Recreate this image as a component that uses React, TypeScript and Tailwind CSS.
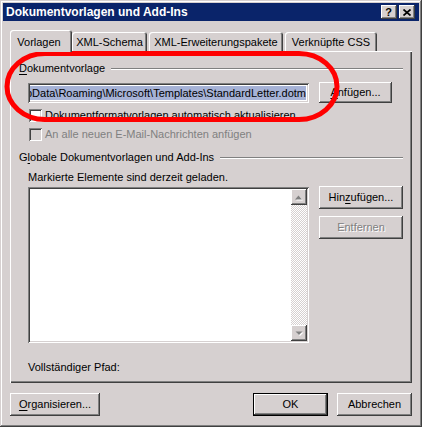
import React from 'react';

// classic 3d bevels
const raised = 'shadow-[inset_-1px_-1px_#404040,inset_1px_1px_#ffffff,inset_-2px_-2px_#808080,inset_2px_2px_#d6d0d0]';
const sunken = 'shadow-[inset_1px_1px_#808080,inset_-1px_-1px_#ffffff,inset_2px_2px_#404040,inset_-2px_-2px_#d6d0d0]';

const Key: React.FC<{ children: React.ReactNode }> = ({ children }) => (
    <span className="underline underline-offset-[2px]">{children}</span>
);

const Button: React.FC<{ children: React.ReactNode; className?: string; disabled?: boolean }> = ({ children, className = '', disabled = false }) => (
    <div
        className={`flex items-center justify-center bg-[#d6d0d0] ${raised} ${className} ${
            disabled ? 'text-[#808080] [text-shadow:1px_1px_0_#ffffff]' : 'text-black'
        }`}
    >
        {children}
    </div>
);

const Checkbox: React.FC<{ disabled?: boolean }> = ({ disabled = false }) => (
    <div className={`w-[13px] h-[13px] shrink-0 ${sunken} ${disabled ? 'bg-[#d6d0d0]' : 'bg-white'}`} />
);

const GroupHeader: React.FC<{ children: React.ReactNode; className?: string }> = ({ children, className = '' }) => (
    <div className={`flex items-center h-[13px] ${className}`}>
        <span className="leading-[13px] whitespace-nowrap">{children}</span>
        <div className="flex-1 ml-[6px] h-[2px] border-t border-t-[#808080] border-b border-b-white" />
    </div>
);

const Tab: React.FC<{ label: string; width: string; selected?: boolean }> = ({ label, width, selected = false }) =>
    selected ? (
        <div className={`relative z-10 ${width} h-[22px] -mb-[1px] pt-[6px] pr-[4px] text-center leading-[13px] bg-[#d6d0d0] rounded-t-[3px] shadow-[inset_1px_1px_#ffffff,inset_-1px_0_#404040,inset_-2px_0_#808080]`}>
            {label}
        </div>
    ) : (
        <div className={`${width} h-[19px] pt-[4px] text-center leading-[13px] bg-[#d6d0d0] rounded-t-[3px] shadow-[inset_1px_1px_#ffffff,inset_-1px_0_#404040,inset_-2px_0_#808080]`}>
            {label}
        </div>
    );

const ArrowButton: React.FC<{ down?: boolean }> = ({ down = false }) => (
    <div className={`h-[16px] flex items-center justify-center bg-[#d6d0d0] ${raised}`}>
        <svg width="8" height="5" viewBox="0 0 8 5" className="overflow-visible">
            {down ? (
                <>
                    <path d="M1.5 1.5 H8.5 L5 5 Z" fill="#ffffff" />
                    <path d="M0.5 0.5 H7.5 L4 4 Z" fill="#808080" />
                </>
            ) : (
                <>
                    <path d="M1 5.5 H8 L4.5 1.5 Z" fill="#ffffff" />
                    <path d="M0 4.5 H7 L3.5 0.5 Z" fill="#808080" />
                </>
            )}
        </svg>
    </div>
);

export default function App() {
    return (
        <div className="relative w-[422px] h-[427px] p-[3px] bg-[#d6d0d0] text-[11px] text-black font-['Liberation_Sans',Arial,sans-serif] shadow-[inset_-1px_-1px_#404040,inset_1px_1px_#d6d0d0,inset_-2px_-2px_#808080,inset_2px_2px_#ffffff]">
            {/* title bar */}
            <div className="h-[18px] bg-[#0a246a] flex items-center pl-[3px] pr-[4px]">
                <span className="flex-1 text-white font-bold text-[12px] leading-[14px] whitespace-nowrap">Dokumentvorlagen und Add-Ins</span>
                <div className={`w-[16px] h-[14px] mr-[2px] flex items-center justify-center bg-[#d6d0d0] ${raised}`}>
                    <span className="font-bold text-[11px] leading-[11px] pr-[1px]">?</span>
                </div>
                <div className={`w-[16px] h-[14px] flex items-center justify-center bg-[#d6d0d0] ${raised}`}>
                    <svg width="8" height="7" viewBox="0 0 8 7">
                        <path d="M0.5 0.5 L7.5 6.5 M7.5 0.5 L0.5 6.5" stroke="#000" strokeWidth="1.7" />
                    </svg>
                </div>
            </div>

            <div className="px-[7px] pt-[9px]">
                {/* tabs */}
                <div className="flex items-end h-[21px]">
                    <Tab label="Vorlagen" width="w-[62px]" selected />
                    <Tab label="XML-Schema" width="w-[75px]" />
                    <div className="ml-[2px]">
                        <Tab label="XML-Erweiterungspakete" width="w-[134px]" />
                    </div>
                    <div className="ml-[2px]">
                        <Tab label="Verknüpfte CSS" width="w-[92px]" />
                    </div>
                </div>

                {/* tab panel */}
                <div className="h-[332px] px-[9px] bg-[#d6d0d0] shadow-[inset_1px_1px_#ffffff,inset_-1px_-1px_#404040,inset_-2px_-2px_#808080]">
                    <GroupHeader className="pt-[11px] h-[24px]">
                        <Key>D</Key>okumentvorlage
                    </GroupHeader>

                    <div className="flex items-start mt-[7px] pl-[9px]">
                        <div className={`mt-[1px] w-[281px] h-[20px] p-[2px] bg-white ${sunken}`}>
                            <div className="h-full overflow-hidden flex justify-end items-center pr-[1px]">
                                <span className="shrink-0 whitespace-nowrap leading-[14px] bg-[#a6b2d6] text-black">
                                    C:\Users\Benutzer\AppData\Roaming\Microsoft\Templates\StandardLetter.dotm
                                </span>
                            </div>
                        </div>
                        <Button className="ml-[10px] w-[73px] h-[21px]">
                            <span><Key>A</Key>nfügen...</span>
                        </Button>
                    </div>

                    <div className="flex items-center mt-[6px] pl-[10px] h-[13px]">
                        <Checkbox />
                        <span className="ml-[3px] leading-[13px] whitespace-nowrap">Dokumentformatvorlagen automatisch aktualisieren</span>
                    </div>
                    <div className="flex items-center mt-[6px] pl-[10px] h-[13px]">
                        <Checkbox disabled />
                        <span className="ml-[3px] leading-[13px] whitespace-nowrap text-[#808080]">An alle neuen E-Mail-Nachrichten anfügen</span>
                    </div>

                    <GroupHeader className="mt-[10px]">
                        G<Key>l</Key>obale Dokumentvorlagen und Add-Ins
                    </GroupHeader>

                    <div className="mt-[7px] pl-[9px] h-[13px] leading-[13px]">Markierte Elemente sind derzeit geladen.</div>

                    <div className="flex items-start mt-[2px] pl-[9px]">
                        <div className={`mt-[1px] w-[281px] h-[156px] p-[2px] bg-white flex ${sunken}`}>
                            <div className="flex-1" />
                            <div className="w-[16px] flex flex-col">
                                <ArrowButton />
                                <div className="flex-1 bg-[repeating-conic-gradient(#d6d0d0_0%_25%,#ffffff_0%_50%)] bg-[length:2px_2px]" />
                                <ArrowButton down />
                            </div>
                        </div>
                        <div className="ml-[10px] w-[84px] flex flex-col">
                            <Button className="h-[23px]">
                                <span>Hin<Key>z</Key>ufügen...</span>
                            </Button>
                            <Button className="mt-[7px] h-[23px]" disabled>
                                Entfernen
                            </Button>
                        </div>
                    </div>

                    <div className="mt-[18px] pl-[9px] h-[13px] leading-[13px]">Vollständiger Pfad:</div>
                </div>

                {/* dialog buttons */}
                <div className="flex mt-[10px]">
                    <Button className="w-[90px] h-[23px]">
                        <span><Key>O</Key>rganisieren...</span>
                    </Button>
                    <div className="ml-auto w-[75px] h-[23px] border border-black bg-[#d6d0d0] flex items-center justify-center shadow-[inset_-1px_-1px_#404040,inset_1px_1px_#ffffff,inset_-2px_-2px_#808080]">
                        OK
                    </div>
                    <Button className="ml-[9px] w-[75px] h-[23px]">Abbrechen</Button>
                </div>
            </div>

            {/* red annotation */}
            <svg className="absolute left-0 top-0 pointer-events-none" width="422" height="427" viewBox="0 0 422 427">
                <rect x="7" y="53.5" width="330" height="66" rx="38" ry="33" fill="none" stroke="#ff0000" strokeWidth="5" />
            </svg>
        </div>
    );
}
